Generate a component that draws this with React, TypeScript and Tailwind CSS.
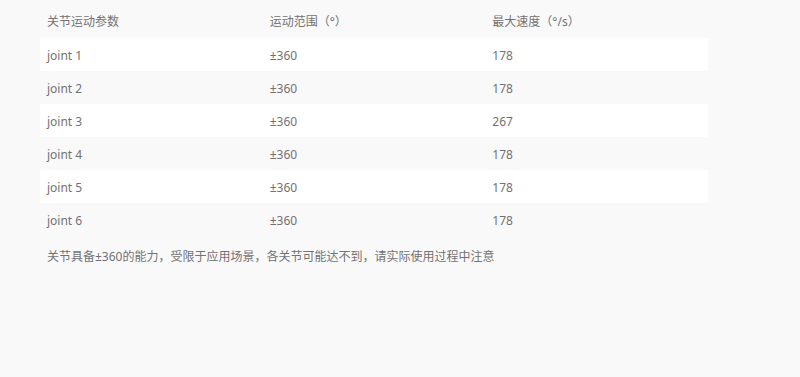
const rows = [
	{ name: "joint 1", range: "±360", speed: "178" },
	{ name: "joint 2", range: "±360", speed: "178" },
	{ name: "joint 3", range: "±360", speed: "267" },
	{ name: "joint 4", range: "±360", speed: "178" },
	{ name: "joint 5", range: "±360", speed: "178" },
	{ name: "joint 6", range: "±360", speed: "178" },
];

export default function App() {
	return (
		<div
			className="w-[800px] h-[377px] bg-[#f9f9f9] pt-[5px] pl-[40px] text-[12px] text-[#727272]"
			style={{ fontFamily: '"Noto Sans", "Noto Sans CJK SC", sans-serif' }}
		>
			<div className="w-[668px] flex flex-col">
				<div className="grid grid-cols-3 h-[33px] items-center pt-[1px]">
					<span className="px-[7px]">关节运动参数</span>
					<span className="px-[7px]">运动范围（°）</span>
					<span className="px-[7px]">最大速度（°/s）</span>
				</div>
				{rows.map((r, i) => (
					<div
						key={r.name}
						className={
							i % 2 === 0
								? "grid grid-cols-3 h-[33px] items-center pt-[2px] bg-white"
								: "grid grid-cols-3 h-[33px] items-center pt-[2px]"
						}
					>
						<span className="px-[7px]">{r.name}</span>
						<span className="px-[7px]">{r.range}</span>
						<span className="px-[7px]">{r.speed}</span>
					</div>
				))}
			</div>
			<p className="mt-[11px] pl-[7px] leading-[20px]">
				关节具备±360的能力，受限于应用场景，各关节可能达不到，请实际使用过程中注意
			</p>
		</div>
	);
}
